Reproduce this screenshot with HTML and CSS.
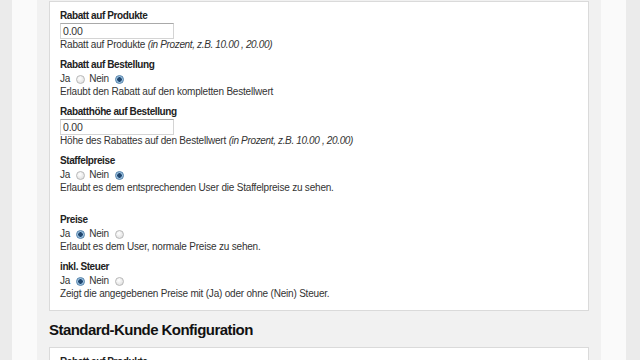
FILE: index.html
```html
<!DOCTYPE html>
<html lang="de">
<head>
<meta charset="utf-8">
<title>Kunden Konfiguration</title>
<link rel="stylesheet" href="styles.css">
</head>
<body>
<div class="page">
  <div class="content">
    <div class="box">
      <div class="field">
        <div class="label">Rabatt auf Produkte</div>
        <div class="control"><span class="input">0.00</span></div>
        <div class="desc">Rabatt auf Produkte <i>(in Prozent, z.B. 10.00 , 20.00)</i></div>
      </div>
      <div class="field">
        <div class="label">Rabatt auf Bestellung</div>
        <div class="control">Ja <span class="radio"></span> Nein <span class="radio on"></span></div>
        <div class="desc">Erlaubt den Rabatt auf den kompletten Bestellwert</div>
      </div>
      <div class="field">
        <div class="label">Rabatthöhe auf Bestellung</div>
        <div class="control"><span class="input">0.00</span></div>
        <div class="desc">Höhe des Rabattes auf den Bestellwert <i>(in Prozent, z.B. 10.00 , 20.00)</i></div>
      </div>
      <div class="field spaced">
        <div class="label">Staffelpreise</div>
        <div class="control">Ja <span class="radio"></span> Nein <span class="radio on"></span></div>
        <div class="desc">Erlaubt es dem entsprechenden User die Staffelpreise zu sehen.</div>
      </div>
      <div class="field">
        <div class="label">Preise</div>
        <div class="control">Ja <span class="radio on"></span> Nein <span class="radio"></span></div>
        <div class="desc">Erlaubt es dem User, normale Preise zu sehen.</div>
      </div>
      <div class="field">
        <div class="label">inkl. Steuer</div>
        <div class="control">Ja <span class="radio on"></span> Nein <span class="radio"></span></div>
        <div class="desc">Zeigt die angegebenen Preise mit (Ja) oder ohne (Nein) Steuer.</div>
      </div>
    </div>
    <h2 class="heading">Standard-Kunde Konfiguration</h2>
    <div class="box">
      <div class="field">
        <div class="label">Rabatt auf Produkte</div>
        <div class="control"><span class="input">0.00</span></div>
        <div class="desc">Rabatt auf Produkte <i>(in Prozent, z.B. 10.00 , 20.00)</i></div>
      </div>
    </div>
  </div>
</div>
</body>
</html>
```
FILE: styles.css
```css
html, body {
  margin: 0;
  padding: 0;
  height: 100%;
  overflow: hidden;
}
body {
  background: #ebebeb;
  font-family: "Liberation Sans", Arial, sans-serif;
  font-size: 10px;
  letter-spacing: -0.2px;
  color: #333;
}
.page {
  margin-left: 12px;
  width: 564px;
  padding: 0 25px;
  background: #fafafa;
  height: 100%;
}
.content {
  background: #f1f1f1;
  padding: 1px 12px 0;
  height: 100%;
}
.box {
  background: #fff;
  border: 1px solid #dadada;
  padding: 7px 10px 3px;
}
.field {
  margin-bottom: 7px;
}
.field.spaced {
  margin-bottom: 19px;
}
.label {
  font-weight: bold;
  font-size: 10px;
  letter-spacing: -0.4px;
  line-height: 14px;
  color: #222;
}
.control {
  line-height: 14px;
  height: 14px;
  display: flex;
  align-items: center;
}
.control .input {
  display: block;
  width: 108px;
  height: 14px;
  line-height: 14px;
  padding: 0 2px;
  border: 1px solid #d4d4d4;
  border-top-color: #a9a9a9;
  margin: 1px 0;
  background: #fff;
  color: #333;
  font-size: 10.5px;
}
.field:has(.input) .control {
  height: 16px;
}
.radio {
  display: inline-block;
  width: 7px;
  height: 7px;
  border-radius: 50%;
  border: 1px solid #b8b8b8;
  background: radial-gradient(circle at 40% 35%, #fff, #d9d9d9);
  margin: 0 4px 0 6px;
}
.radio.on {
  border-color: #4f7fa8;
  background: radial-gradient(circle at 50% 50%, #20466e 0 2px, #8fb8da 2.5px, #d7e8f5);
}
.desc {
  line-height: 12px;
}
.desc i {
  font-style: italic;
  letter-spacing: -0.35px;
}
.heading {
  margin: 0;
  padding: 10px 0 8px;
  font-size: 15px;
  letter-spacing: -0.55px;
  line-height: 18px;
  color: #111;
}
```
